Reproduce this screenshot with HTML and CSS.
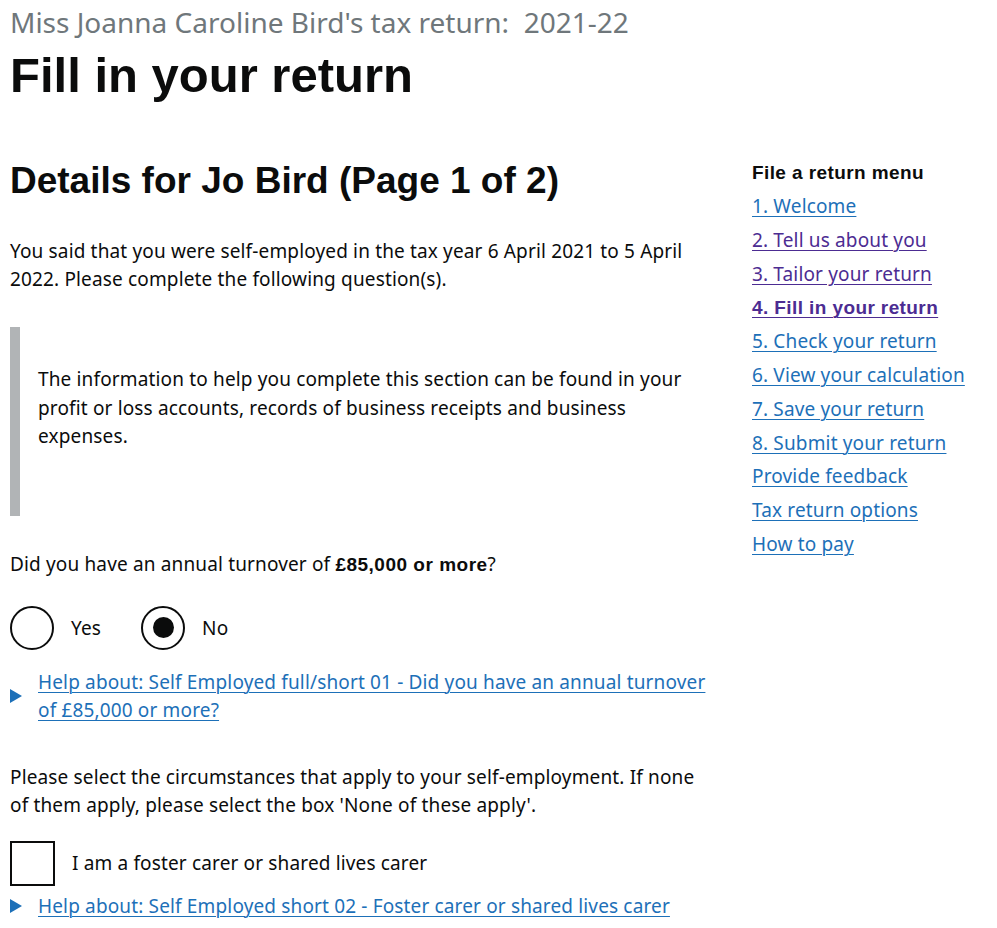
FILE: index.html
```html
<!DOCTYPE html>
<html lang="en">
<head>
  <meta charset="UTF-8">
  <meta name="viewport" content="width=device-width, initial-scale=1.0">
  <title>Fill in your return</title>
  <link rel="stylesheet" href="styles.css">
</head>
<body>
  <div class="page">
    <span class="caption">Miss Joanna Caroline Bird's tax return:&nbsp; 2021-22</span>
    <h1>Fill in your return</h1>

    <div class="row">
      <!-- Main form column -->
      <main class="main">
        <h2>Details for Jo Bird (Page 1 of 2)</h2>
        <p class="intro">You said that you were self-employed in the tax year 6 April 2021 to 5 April 2022. Please complete the following question(s).</p>

        <div class="inset">
          <p>The information to help you complete this section can be found in your profit or loss accounts, records of business receipts and business expenses.</p>
        </div>

        <p class="question">Did you have an annual turnover of <strong>£85,000 or more</strong>?</p>

        <div class="radios">
          <label class="radio">
            <input type="radio" name="turnover" value="yes">
            <span class="radio-mark"></span>
            <span class="radio-label">Yes</span>
          </label>
          <label class="radio">
            <input type="radio" name="turnover" value="no" checked>
            <span class="radio-mark"></span>
            <span class="radio-label">No</span>
          </label>
        </div>

        <details class="help">
          <summary><span class="arrow"></span><a href="#">Help about: Self Employed full/short 01 - Did you have an annual turnover of £85,000 or more?</a></summary>
        </details>

        <p class="circumstances">Please select the circumstances that apply to your self-employment. If none of them apply, please select the box 'None of these apply'.</p>

        <label class="checkbox">
          <input type="checkbox" name="foster">
          <span class="check-mark"></span>
          <span class="check-label">I am a foster carer or shared lives carer</span>
        </label>

        <details class="help help-short">
          <summary><span class="arrow"></span><a href="#">Help about: Self Employed short 02 - Foster carer or shared lives carer</a></summary>
        </details>
      </main>

      <!-- Return menu -->
      <nav class="side-menu">
        <h3>File a return menu</h3>
        <ul>
          <li><a href="#">1. Welcome</a></li>
          <li><a href="#" class="visited">2. Tell us about you</a></li>
          <li><a href="#" class="visited">3. Tailor your return</a></li>
          <li><a href="#" class="visited current">4. Fill in your return</a></li>
          <li><a href="#">5. Check your return</a></li>
          <li><a href="#">6. View your calculation</a></li>
          <li><a href="#">7. Save your return</a></li>
          <li><a href="#">8. Submit your return</a></li>
          <li><a href="#">Provide feedback</a></li>
          <li><a href="#">Tax return options</a></li>
          <li><a href="#">How to pay</a></li>
        </ul>
      </nav>
    </div>
  </div>
</body>
</html>
```

FILE: styles.css
```css
body {
  font-family: "Noto Sans", "Liberation Sans", Arial, sans-serif;
  margin: 0;
  padding: 0;
  background-color: #ffffff;
  color: #0b0c0c;
  font-size: 19px;
  letter-spacing: 0.15px;
}
.page {
  padding: 5px 10px 0;
}
.caption {
  display: block;
  font-size: 28px;
  line-height: 35px;
  letter-spacing: 0;
  color: #6f777b;
}
h1,
h2,
strong,
.side-menu h3,
.side-menu a.current {
  font-family: "Liberation Sans", Arial, sans-serif;
}
h1 {
  font-size: 49px;
  line-height: 50px;
  font-weight: 700;
  letter-spacing: 0;
  margin: 10px 0 0;
}
.row {
  display: grid;
  grid-template-columns: 702px 1fr;
  column-gap: 40px;
  margin-top: 55px;
}
h2 {
  font-size: 37px;
  line-height: 40px;
  font-weight: 700;
  letter-spacing: 0;
  margin: 6px 0 0;
}
strong {
  letter-spacing: 0.5px;
}
p {
  margin: 0;
  line-height: 28px;
}
a {
  color: #1d70b8;
  text-decoration: underline;
  text-decoration-thickness: 1px;
  text-underline-offset: 0.16em;
}
.intro {
  margin-top: 36px;
}
.inset {
  margin-top: 34px;
  padding: 38px 15px 65px 18px;
  border-left: 10px solid #b1b4b6;
}
.inset p {
  line-height: 28.5px;
}
.question {
  margin-top: 34px;
}
.radios {
  display: flex;
  margin-top: 27px;
}
.radio,
.checkbox {
  display: flex;
  align-items: center;
  cursor: pointer;
}
.radio {
  margin-right: 40px;
}
.radio input,
.checkbox input {
  position: absolute;
  opacity: 0;
  width: 0;
  height: 0;
}
.radio-mark {
  width: 40px;
  height: 40px;
  border: 2px solid #0b0c0c;
  border-radius: 50%;
  display: flex;
  align-items: center;
  justify-content: center;
}
.radio input:checked + .radio-mark::after {
  content: "";
  width: 21px;
  height: 21px;
  border-radius: 50%;
  background-color: #0b0c0c;
}
.radio-label,
.check-label {
  margin-left: 17px;
  line-height: 28px;
}
.help {
  margin-top: 18px;
}
.help summary {
  display: flex;
  align-items: center;
  list-style: none;
  line-height: 28px;
  cursor: pointer;
}
.help summary::-webkit-details-marker {
  display: none;
}
.arrow {
  flex: none;
  width: 0;
  height: 0;
  border-style: solid;
  border-width: 7px 0 7px 12px;
  border-color: transparent transparent transparent #1d70b8;
  margin-right: 16px;
}
.circumstances {
  margin-top: 39px;
}
.checkbox {
  margin-top: 22px;
}
.check-mark {
  width: 41px;
  height: 41px;
  border: 2px solid #0b0c0c;
}
.help-short {
  margin-top: 6px;
}
.side-menu h3 {
  font-size: 19px;
  font-weight: 700;
  line-height: 35px;
  letter-spacing: 0.4px;
  margin: 0;
}
.side-menu ul {
  list-style: none;
  margin: 0;
  padding: 0;
}
.side-menu li {
  line-height: 33.8px;
}
.side-menu a.visited {
  color: #4c2c92;
}
.side-menu a.current {
  font-weight: 700;
  letter-spacing: 0.4px;
}
```
